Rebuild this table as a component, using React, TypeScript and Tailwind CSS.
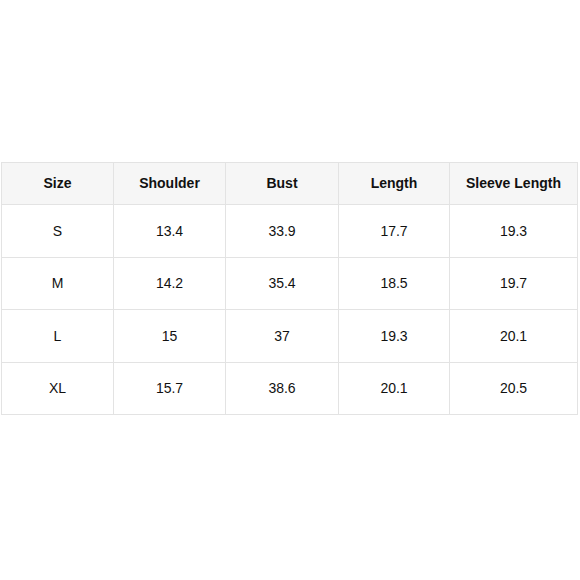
const headers = ["Size", "Shoulder", "Bust", "Length", "Sleeve Length"];

const rows = [
  ["S", "13.4", "33.9", "17.7", "19.3"],
  ["M", "14.2", "35.4", "18.5", "19.7"],
  ["L", "15", "37", "19.3", "20.1"],
  ["XL", "15.7", "38.6", "20.1", "20.5"],
];

const colWidths = ["w-[112px]", "w-[112px]", "w-[113px]", "w-[111px]", "w-[128px]"];
const rowHeights = ["h-[53px]", "h-[52px]", "h-[53px]", "h-[52px]"];

export default function App() {
  return (
    <div className="h-[580px] w-[580px] bg-white pt-[162px] pl-px font-['Liberation_Sans',Arial,sans-serif] text-[14px] text-[#111]">
      <table className="w-[577px] table-fixed border-collapse">
        <colgroup>
          {colWidths.map((w, i) => (
            <col key={i} className={w} />
          ))}
        </colgroup>
        <thead>
          <tr className="h-[42px] bg-[#f6f6f6]">
            {headers.map((h) => (
              <th key={h} className="border border-[#e3e3e3] text-center font-bold">
                {h}
              </th>
            ))}
          </tr>
        </thead>
        <tbody>
          {rows.map((row, r) => (
            <tr key={row[0]} className={rowHeights[r]}>
              {row.map((cell, i) => (
                <td key={i} className="border border-[#e3e3e3] text-center">
                  {cell}
                </td>
              ))}
            </tr>
          ))}
        </tbody>
      </table>
    </div>
  );
}
